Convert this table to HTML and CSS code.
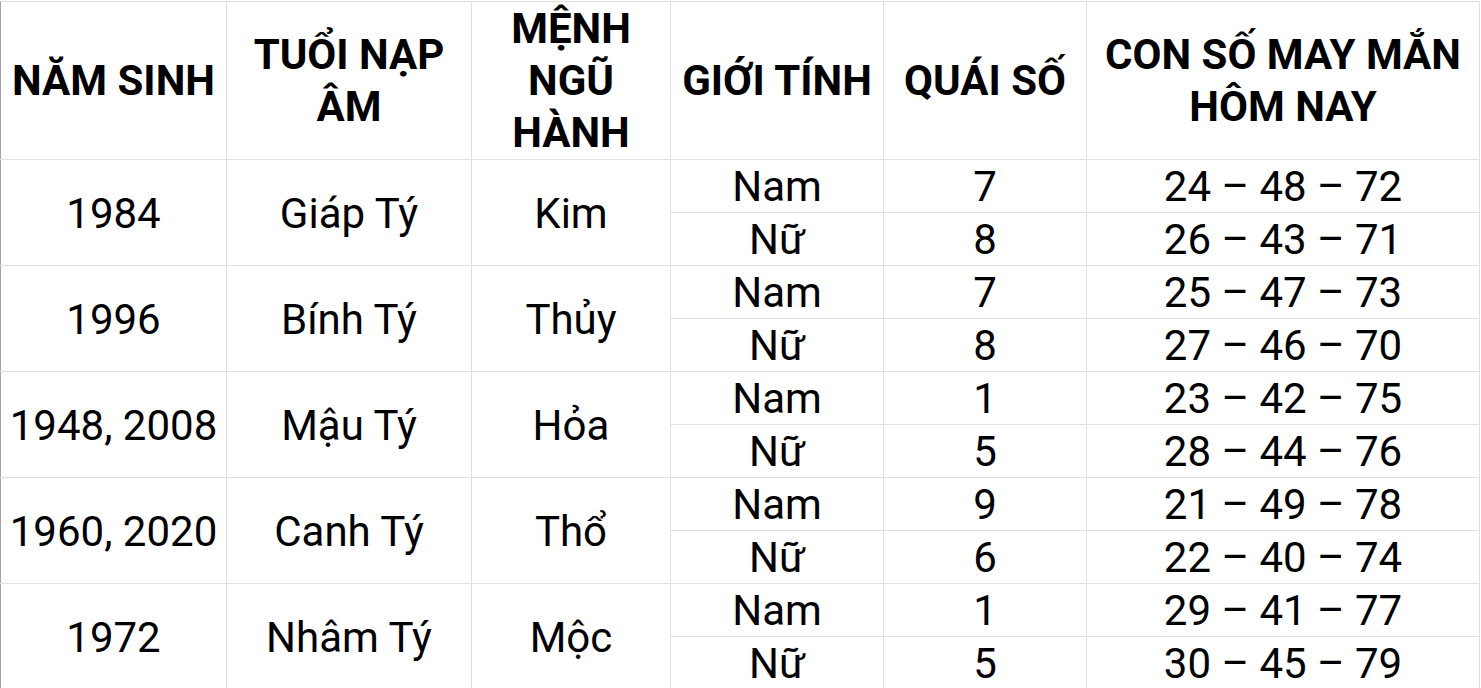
FILE: index.html
```html
<!DOCTYPE html>
<html lang="vi">
<head>
<meta charset="utf-8">
<title>Con số may mắn</title>
<link rel="stylesheet" href="styles.css">
</head>
<body>
<table class="sheet">
  <colgroup>
    <col class="c1"><col class="c2"><col class="c3"><col class="c4"><col class="c5"><col class="c6">
  </colgroup>
  <thead>
    <tr class="head">
      <th>NĂM SINH</th>
      <th>TUỔI NẠP<br>ÂM</th>
      <th>MỆNH<br>NGŨ<br>HÀNH</th>
      <th>GIỚI TÍNH</th>
      <th>QUÁI SỐ</th>
      <th>CON SỐ MAY MẮN<br>HÔM NAY</th>
    </tr>
  </thead>
  <tbody>
    <tr><td rowspan="2">1984</td><td rowspan="2">Giáp Tý</td><td rowspan="2">Kim</td><td>Nam</td><td>7</td><td>24 – 48 – 72</td></tr>
    <tr><td>Nữ</td><td>8</td><td>26 – 43 – 71</td></tr>
    <tr><td rowspan="2">1996</td><td rowspan="2">Bính Tý</td><td rowspan="2">Thủy</td><td>Nam</td><td>7</td><td>25 – 47 – 73</td></tr>
    <tr><td>Nữ</td><td>8</td><td>27 – 46 – 70</td></tr>
    <tr><td rowspan="2">1948, 2008</td><td rowspan="2">Mậu Tý</td><td rowspan="2">Hỏa</td><td>Nam</td><td>1</td><td>23 – 42 – 75</td></tr>
    <tr><td>Nữ</td><td>5</td><td>28 – 44 – 76</td></tr>
    <tr><td rowspan="2">1960, 2020</td><td rowspan="2">Canh Tý</td><td rowspan="2">Thổ</td><td>Nam</td><td>9</td><td>21 – 49 – 78</td></tr>
    <tr><td>Nữ</td><td>6</td><td>22 – 40 – 74</td></tr>
    <tr><td rowspan="2">1972</td><td rowspan="2">Nhâm Tý</td><td rowspan="2">Mộc</td><td>Nam</td><td>1</td><td>29 – 41 – 77</td></tr>
    <tr><td>Nữ</td><td>5</td><td>30 – 45 – 79</td></tr>
  </tbody>
</table>
</body>
</html>
```
FILE: styles.css
```css
html, body {
  margin: 0;
  padding: 0;
  background: #ffffff;
}
body {
  padding-top: 1px;
  font-family: Roboto, "Liberation Sans", sans-serif;
  color: #000000;
}
.sheet {
  border-collapse: collapse;
  table-layout: fixed;
  width: 1480px;
  border-left: 1px solid #a3a3a3;
}
.c1 { width: 226px; }
.c2 { width: 245px; }
.c3 { width: 199px; }
.c4 { width: 213px; }
.c5 { width: 203px; }
.c6 { width: 393px; }
.sheet th,
.sheet td {
  border: 1px solid #e0e0e0;
  padding: 0;
  text-align: center;
  vertical-align: middle;
  white-space: nowrap;
  overflow: hidden;
}
.sheet th:first-child,
.sheet td:first-child {
  border-left: 1px solid #a3a3a3;
}
.head th {
  height: 156px;
  padding-top: 1px;
  font-size: 42px;
  font-weight: 700;
  line-height: 52px;
}
.sheet td {
  height: 51px;
  padding-top: 1px;
  font-size: 42px;
  font-weight: 400;
  line-height: 51px;
}
```
